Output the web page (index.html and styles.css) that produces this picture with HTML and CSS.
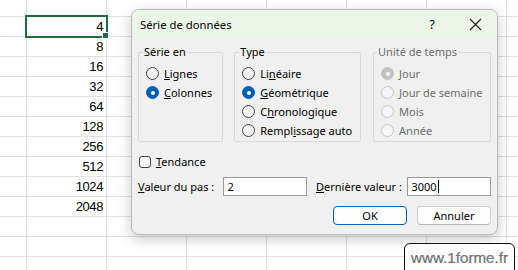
FILE: index.html
```html
<!DOCTYPE html>
<html lang="fr">
<head>
<meta charset="utf-8">
<title>Série de données</title>
<link rel="stylesheet" href="styles.css">
</head>
<body>
<div class="sheet">
  <div class="col">
    <div class="cell selected">4</div>
    <div class="cell">8</div>
    <div class="cell">16</div>
    <div class="cell">32</div>
    <div class="cell">64</div>
    <div class="cell">128</div>
    <div class="cell">256</div>
    <div class="cell">512</div>
    <div class="cell">1024</div>
    <div class="cell">2048</div>
  </div>

  <div class="dialog">
    <div class="titlebar">
      <span class="title">Série de données</span>
      <span class="help">?</span>
      <span class="close">
        <svg width="13" height="13" viewBox="0 0 13 13"><path d="M1 1 L12 12 M12 1 L1 12" stroke="#1a1a1a" stroke-width="1.1" fill="none"/></svg>
      </span>
    </div>
    <div class="body">
      <div class="groups">
        <fieldset class="group g-serie">
          <legend>Série en</legend>
          <div class="radio"><span class="dot"></span><span><u>L</u>ignes</span></div>
          <div class="radio"><span class="dot on"></span><span><u>C</u>olonnes</span></div>
        </fieldset>
        <fieldset class="group g-type">
          <legend>Type</legend>
          <div class="radio"><span class="dot"></span><span>Li<u>n</u>éaire</span></div>
          <div class="radio"><span class="dot on"></span><span><u>G</u>éométrique</span></div>
          <div class="radio"><span class="dot"></span><span>C<u>h</u>ronologique</span></div>
          <div class="radio"><span class="dot"></span><span>Rempl<u>i</u>ssage auto</span></div>
        </fieldset>
        <fieldset class="group g-unit disabled">
          <legend>Unité de temps</legend>
          <div class="radio"><span class="dot on"></span><span>Jour</span></div>
          <div class="radio"><span class="dot"></span><span>Jour de semaine</span></div>
          <div class="radio"><span class="dot"></span><span>Mois</span></div>
          <div class="radio"><span class="dot"></span><span>Année</span></div>
        </fieldset>
      </div>
      <div class="check"><span class="box"></span><span><u>T</u>endance</span></div>
      <div class="fields">
        <span class="lbl lbl1"><u>V</u>aleur du pas :</span>
        <span class="input">2</span>
        <span class="lbl lbl2"><u>D</u>ernière valeur :</span>
        <span class="input">3000<span class="caret"></span></span>
      </div>
      <div class="buttons">
        <span class="btn default">OK</span>
        <span class="btn">Annuler</span>
      </div>
    </div>
  </div>

  <div class="watermark">www.1forme.fr</div>
</div>
</body>
</html>
```
FILE: styles.css
```css
html, body {
  margin: 0;
  padding: 0;
}
.sheet {
  position: relative;
  width: 518px;
  height: 270px;
  overflow: hidden;
  background-color: #ffffff;
  background-image:
    linear-gradient(to right, #e1e1e1 1px, transparent 1px),
    linear-gradient(to bottom, #e1e1e1 1px, transparent 1px);
  background-size: 80px 20px;
  background-position: 26px 16px;
}
.col {
  margin-left: 26px;
  padding-top: 16px;
  width: 80px;
  display: flex;
  flex-direction: column;
}
.cell {
  position: relative;
  height: 20px;
  line-height: 22px;
  text-align: right;
  padding-right: 3px;
  font-family: "Liberation Sans", Arial, sans-serif;
  font-size: 13px;
  letter-spacing: -0.4px;
  color: #000;
}
.cell.selected::before {
  content: "";
  position: absolute;
  left: -1px;
  top: -1px;
  right: -2px;
  bottom: -2px;
  border: 2px solid #1f6d43;
}
.cell.selected::after {
  content: "";
  position: absolute;
  right: -3px;
  bottom: -3px;
  width: 5px;
  height: 5px;
  background: #1f6d43;
  border: 1px solid #fff;
}

/* Dialog */
.dialog {
  position: absolute;
  left: 131px;
  top: 9px;
  width: 367px;
  height: 226px;
  box-sizing: border-box;
  border: 1px solid #b9b9b9;
  border-radius: 8px;
  background: #f0f0f0;
  box-shadow: 0 4px 14px rgba(0, 0, 0, 0.22);
  overflow: hidden;
  font-family: "Noto Sans", "Open Sans", sans-serif;
  font-size: 11px;
  color: #000;
}
.titlebar {
  height: 28px;
  background: #ecf6e8;
  display: flex;
  align-items: center;
  padding-left: 8px;
}
.title {
  font-size: 11.3px;
  flex: 1;
  padding-top: 1px;
}
.help {
  font-size: 12px;
  width: 12px;
  text-align: center;
  margin-right: 31px;
}
.close {
  display: flex;
  width: 13px;
  height: 13px;
  margin-right: 15px;
}
.body {
  padding: 6px 6px 0 6px;
}
.groups {
  display: flex;
  gap: 11px;
  align-items: stretch;
}
.group {
  margin: 0;
  padding: 4px 0 1px 7px;
  border: 1px solid #dadada;
  border-radius: 2px;
  min-width: 0;
}
.group legend {
  margin-left: -3px;
  padding: 0 1px;
  line-height: 16px;
}
.g-unit legend {
  margin-left: -4px;
}
.g-serie { width: 86px; box-sizing: border-box; }
.g-type { width: 128px; box-sizing: border-box; margin-left: 0; }
.g-unit { width: 119px; box-sizing: border-box; margin-left: 1px; }
.disabled legend,
.disabled .radio {
  color: #6e6e6e;
}
.radio {
  height: 19px;
  display: flex;
  align-items: center;
  gap: 5px;
}
.dot {
  width: 13px;
  height: 13px;
  box-sizing: border-box;
  border-radius: 50%;
  border: 1px solid #444;
  background: #f7f7f7;
  flex: none;
  position: relative;
}
.dot.on {
  border-color: #005fb8;
  background: #005fb8;
}
.dot.on::after {
  content: "";
  position: absolute;
  left: 3.5px;
  top: 3.5px;
  width: 4px;
  height: 4px;
  border-radius: 50%;
  background: #fff;
}
.disabled .dot {
  border-color: #c6c6c6;
  background: #f6f6f6;
}
.disabled .dot.on {
  border-color: #c2c2c2;
  background: #c2c2c2;
}
.check {
  margin-top: 12px;
  height: 15px;
  display: flex;
  align-items: center;
  gap: 5px;
  padding-left: 1px;
}
.box {
  width: 12px;
  height: 12px;
  box-sizing: border-box;
  border: 1px solid #444;
  border-radius: 3px;
  background: #f7f7f7;
}
.fields {
  margin-top: 8px;
  display: flex;
  align-items: center;
  height: 19px;
}
.lbl1 { width: 86px; }
.lbl2 { width: 92px; margin-left: 9px; }
.input {
  width: 84px;
  height: 19px;
  box-sizing: border-box;
  border: 1px solid #9a9a9a;
  background: #fff;
  padding-left: 3px;
  line-height: 17px;
  display: flex;
  align-items: center;
}
.caret {
  display: inline-block;
  width: 1px;
  height: 13px;
  background: #000;
  margin-left: 1px;
}
.buttons {
  margin-top: 10px;
  display: flex;
  justify-content: flex-end;
  gap: 10px;
  padding-right: 0;
}
.btn {
  width: 74px;
  height: 19px;
  box-sizing: border-box;
  border: 1px solid #cfcfcf;
  border-bottom-color: #b5b5b5;
  border-radius: 4px;
  background: #fdfdfd;
  display: flex;
  align-items: center;
  justify-content: center;
}
.btn.default {
  border: 1px solid #005fb8;
}

/* watermark */
.watermark {
  position: absolute;
  left: 404px;
  top: 243px;
  width: 111px;
  height: 34px;
  box-sizing: border-box;
  border: 1px solid #111;
  border-radius: 6px;
  background: #fff;
  font-family: "Liberation Sans", Arial, sans-serif;
  font-size: 15.2px;
  color: #808080;
  -webkit-text-stroke: 0.2px #333;
  padding: 5px 0 0 6px;
}
```
